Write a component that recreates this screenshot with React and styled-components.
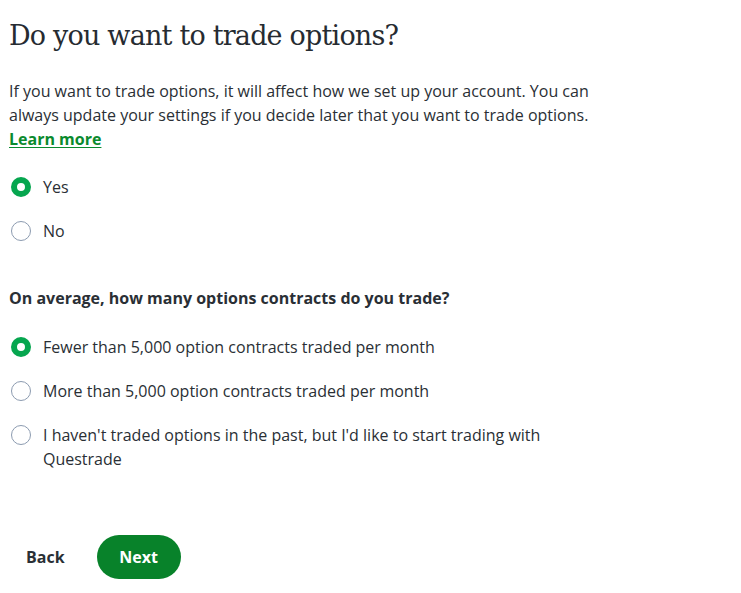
import React, { useState } from "react";
import styled, { createGlobalStyle } from "styled-components";

const Global = createGlobalStyle`
  html, body { margin: 0; padding: 0; background: #ffffff; }
  body { font-family: "Open Sans", "Liberation Sans", sans-serif; color: #2a2f35; }
  * { box-sizing: border-box; }
`;

const Page = styled.main`
  max-width: 610px;
  padding: 18px 0 0 9px;
  display: flex;
  flex-direction: column;
`;

const Title = styled.h1`
  margin: 0;
  font-family: "DejaVu Serif", "Liberation Serif", serif;
  font-weight: 400;
  font-size: 27px;
  line-height: 36px;
  letter-spacing: -0.8px;
  color: #262b31;
`;

const Paragraph = styled.p`
  margin: 25px 0 0;
  font-size: 16px;
  line-height: 24px;
`;

const Link = styled.a`
  color: #0a8a2e;
  font-weight: 700;
  text-decoration: underline;
  text-underline-offset: 2px;
`;

const Group = styled.div`
  display: flex;
  flex-direction: column;
  gap: 20px;
  margin-top: ${(p) => p.$top}px;
`;

const Question = styled.div`
  margin-top: 43px;
  font-size: 16px;
  line-height: 24px;
  font-weight: 700;
`;

const Option = styled.label`
  display: flex;
  align-items: flex-start;
  gap: 12px;
  font-size: 16px;
  line-height: 24px;
  cursor: pointer;
  padding-left: 2px;
`;

const Radio = styled.span`
  flex: none;
  width: 20px;
  height: 20px;
  margin-top: 2px;
  border-radius: 50%;
  background: #ffffff;
  border: ${(p) => (p.$checked ? "6px solid #06a64f" : "1.5px solid #8c9bb0")};
`;

const Actions = styled.div`
  display: flex;
  align-items: center;
  gap: 32px;
  margin-top: 64px;
  padding-left: 17px;
`;

const BackButton = styled.button`
  border: 0;
  background: none;
  padding: 0;
  font-family: inherit;
  font-size: 16px;
  font-weight: 700;
  color: #2a2f35;
  cursor: pointer;
`;

const NextButton = styled.button`
  border: 0;
  width: 84px;
  height: 44px;
  border-radius: 22px;
  background: #08822a;
  color: #ffffff;
  font-family: inherit;
  font-size: 16px;
  font-weight: 700;
  cursor: pointer;
`;

function RadioOption({ checked, onClick, children }) {
  return (
    <Option onClick={onClick}>
      <Radio $checked={checked} />
      <span>{children}</span>
    </Option>
  );
}

export default function App() {
  const [trade, setTrade] = useState("yes");
  const [volume, setVolume] = useState("fewer");
  return (
    <>
      <Global />
      <Page>
        <Title>Do you want to trade options?</Title>
        <Paragraph>
          If you want to trade options, it will affect how we set up your account. You can
          always update your settings if you decide later that you want to trade options.{" "}
          <Link href="#">Learn more</Link>
        </Paragraph>
        <Group $top={24}>
          <RadioOption checked={trade === "yes"} onClick={() => setTrade("yes")}>Yes</RadioOption>
          <RadioOption checked={trade === "no"} onClick={() => setTrade("no")}>No</RadioOption>
        </Group>
        <Question>On average, how many options contracts do you trade?</Question>
        <Group $top={25}>
          <RadioOption checked={volume === "fewer"} onClick={() => setVolume("fewer")}>
            Fewer than 5,000 option contracts traded per month
          </RadioOption>
          <RadioOption checked={volume === "more"} onClick={() => setVolume("more")}>
            More than 5,000 option contracts traded per month
          </RadioOption>
          <RadioOption checked={volume === "none"} onClick={() => setVolume("none")}>
            I haven't traded options in the past, but I'd like to start trading with Questrade
          </RadioOption>
        </Group>
        <Actions>
          <BackButton>Back</BackButton>
          <NextButton>Next</NextButton>
        </Actions>
      </Page>
    </>
  );
}
